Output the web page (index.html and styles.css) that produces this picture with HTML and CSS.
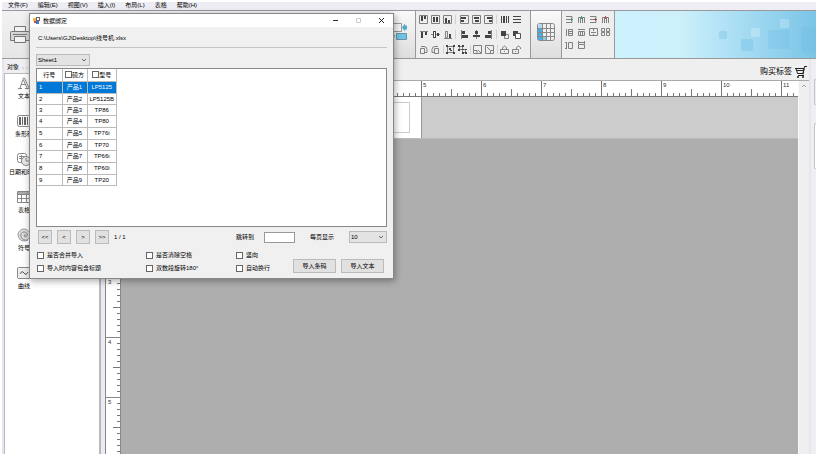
FILE: index.html
```html
<!DOCTYPE html>
<html lang="zh-CN">
<head>
<meta charset="utf-8">
<title>数据绑定</title>
<link rel="stylesheet" href="styles.css">
</head>
<body>
<svg class="defs" aria-hidden="true">
  <symbol id="al-tl" viewBox="0 0 9 9"><path d="M.5.5h8v8h-8z" class="l"/><path d="M2 1h2v5H2zM5 1h2v3H5z" class="d"/></symbol>
  <symbol id="al-c" viewBox="0 0 9 9"><path d="M.5.5h8v8h-8z" class="l"/><path d="M2 2h2v5H2zM5 2h2v5H5z" class="d"/></symbol>
  <symbol id="al-b" viewBox="0 0 9 9"><path d="M.5.5h8v8h-8z" class="l"/><path d="M2 3h2v5H2zM5 5h2v3H5z" class="d"/></symbol>
  <symbol id="al-l" viewBox="0 0 9 9"><path d="M.5.5h8v8h-8z" class="l"/><path d="M1 2h5v2H1zM1 5h3v2H1z" class="d"/></symbol>
  <symbol id="al-m" viewBox="0 0 9 9"><path d="M.5.5h8v8h-8z" class="l"/><path d="M2 2h5v2H2zM3 5h4v2H3z" class="d"/></symbol>
  <symbol id="al-r" viewBox="0 0 9 9"><path d="M.5.5h8v8h-8z" class="l"/><path d="M3 2h5v2H3zM5 5h3v2H5z" class="d"/></symbol>
  <symbol id="dist-h" viewBox="0 0 9 9"><path d="M1 1h1v7H1zM3 1h2v7H3zM6 1h1v7H6zM8 1h1v7H8z" class="d"/></symbol>
  <symbol id="dist-v" viewBox="0 0 9 9"><path d="M1 1h8v1H1zM1 4h8v1H1zM1 7h8v1H1z" class="d"/></symbol>
  <symbol id="top" viewBox="0 0 9 9"><path d="M1 1.5h8" class="l"/><path d="M2 2h2v6H2zM6 2h2v3H6z" class="d"/></symbol>
  <symbol id="mid" viewBox="0 0 9 9"><path d="M0 4.5h9" class="l"/><path d="M2 1h3v7H2zM6 3h2v3H6z" class="d"/><path d="M3 2h1v5H3z" fill="#fff"/></symbol>
  <symbol id="bot" viewBox="0 0 9 9"><path d="M1 8.500h8M2.500 1.500h2v6h-2z" class="l"/><path d="M6 4h2v4H6z" class="d"/></symbol>
  <symbol id="left" viewBox="0 0 9 9"><path d="M1.500 0v9" class="l"/><path d="M2 1h3v3H2zM2 5h6v3H2z" class="d"/></symbol>
  <symbol id="ctr" viewBox="0 0 9 9"><path d="M4.500 0v9" class="l"/><path d="M3 1h3v3H3zM1 5h7v2H1z" class="d"/></symbol>
  <symbol id="right" viewBox="0 0 9 9"><path d="M7.500 0v9" class="l"/><path d="M4 1h3v3H4zM1 5h6v3H1z" class="d"/></symbol>
  <symbol id="front" viewBox="0 0 9 9"><path d="M4.500 4.500h4v4h-4z" class="l"/><path d="M1 1h5v5H1z" class="d"/></symbol>
  <symbol id="back" viewBox="0 0 9 9"><path d="M1 1h5v5H1z" class="d"/><path d="M3.500 3.500h5v5h-5z" stroke="#555" fill="#fff"/></symbol>
  <symbol id="rotl" viewBox="0 0 9 9"><path d="M1.500 3.500h4v5h-4zM2 1.500h3q3 0 3 3v3h-2" class="l"/></symbol>
  <symbol id="rotr" viewBox="0 0 9 9"><path d="M3.500 3.500h4v5h-4zM7 1.500H4q-3 0-3 3v3h2" class="l"/></symbol>
  <symbol id="grp" viewBox="0 0 9 9"><path d="M1.500 1.500h6v6h-6z" class="l"/><path d="M0 0h2v2H0zM7 0h2v2H7zM0 7h2v2H0zM7 7h2v2H7zM3 3h2v2H3zM4 5h2v1H4z" class="d"/></symbol>
  <symbol id="ungrp" viewBox="0 0 9 9"><path d="M1.500 1.500h3v3h-3zM4.500 4.500h3v3h-3z" class="l"/><path d="M0 0h2v2H0zM4 0h2v2H4zM0 4h2v2H0zM4 4h2v1H4zM7 4h2v1H7zM4 7h2v2H4zM7 7h2v2H7z" class="d"/></symbol>
  <symbol id="zoomin" viewBox="0 0 9 9"><path d="M.5.5h8v8h-8zM1 5.500h3v3M5 5l3 3" class="l"/></symbol>
  <symbol id="zoomout" viewBox="0 0 9 9"><path d="M.5.5h8v8h-8zM8 5.500H5.500V8M2 2l3 3" class="l"/></symbol>
  <symbol id="lock" viewBox="0 0 9 9"><path d="M.5 4.500h8v4h-8zM2.500 4V2.500q2-3 4 0V4M4.500 6v1" class="l"/></symbol>
  <symbol id="unlock" viewBox="0 0 9 9"><path d="M.5 4.500h6v4h-6zM4.500 4V2.500q2-3 4 0V4M3.500 6v1" class="l"/></symbol>
  <symbol id="rowadd" viewBox="0 0 9 9"><path d="M1 1.500h6v2M1 7.500h6v-2M1 4.500h4" class="l"/><path d="M5 4h3v1H5zM6 3h1v3H6z" fill="#4f8f6a"/></symbol>
  <symbol id="coladd" viewBox="0 0 9 9"><path d="M1.500 8V2.500h2V8M5.500 8V2.500h2V8" class="l"/><path d="M3 2h3v1H3zM4 1h1v3H4z" fill="#4f9f6e"/></symbol>
  <symbol id="rowdel" viewBox="0 0 9 9"><path d="M1 1.500h6v2M1 7.500h6v-2M1 4.500h4" class="l"/><path d="M5 4h3v1H5zM6 3h1v3H6z" fill="#a04a58"/></symbol>
  <symbol id="coldel" viewBox="0 0 9 9"><path d="M1.500 8V2.500h2V8M5.500 8V2.500h2V8" class="l"/><path d="M3 2h3v1H3zM4 1h1v3H4z" fill="#b9505a"/></symbol>
  <symbol id="rows" viewBox="0 0 9 9"><path d="M1.500 1v7M3.500 1.500h4v6h-4zM3.500 3.500h4M3.500 5.500h4" class="l"/></symbol>
  <symbol id="cols" viewBox="0 0 9 9"><path d="M1 1.500h7M1.500 3.500h6v4h-6zM3.500 3v5M5.500 3v5" class="l"/></symbol>
  <symbol id="merge" viewBox="0 0 9 9"><path d="M.5.5h8v7h-8zM4.500 1v2M4.500 6v2M2 4.500h5" class="l"/></symbol>
  <symbol id="split" viewBox="0 0 9 9"><path d="M.5.5h3v3h-3zM5.500.5h3v3h-3zM.5 4.500h3v3h-3zM5.500 4.500h3v3h-3z" class="l"/></symbol>
  <symbol id="rowh" viewBox="0 0 9 9"><path d="M1.500 1v7M0 1.500h2M0 7.500h2M3.500 1.500h4v6h-4z" class="l"/></symbol>
  <symbol id="colw" viewBox="0 0 9 9"><path d="M1 1.500h7M1.500 0v3M7.500 0v3M1.500 3.500h6v4h-6z" class="l"/></symbol>
</svg>

<div class="app">
  <nav class="menubar">
    <a href="#">文件(F)</a><a href="#">编辑(E)</a><a href="#">视图(V)</a><a href="#">插入(I)</a><a href="#">布局(L)</a><a href="#">表格</a><a href="#">帮助(H)</a>
  </nav>

  <header class="ribbon">
    <div class="group print">
      <button aria-label="打印">
        <svg width="20" height="20" viewBox="0 0 20 20"><path d="M4.500 6V1.500h11V6" fill="#f3f3f3" stroke="#777"/><path d="M1.500 6.500h17q1 0 1 1v8h-19v-8q0-1 1-1z" fill="#d5d5d5" stroke="#777"/><path d="M3 9.500h14" stroke="#777"/><path d="M4.500 11.500h11v6h-11z" fill="#f3f3f3" stroke="#777"/></svg>
      </button>
    </div>
    <div class="group swap">
      <button aria-label="交换">
        <svg width="18" height="18" viewBox="0 0 18 18"><path d="M1.500 1.500h10v8h-10z" fill="#f4f4f4" stroke="#999"/><path d="M12 5.500l3-4v2h2v4h-2v2z" fill="#4ea7cc"/><path d="M5 14l-3-4v2H0v4h2v2z" fill="#51798b"/><path d="M6.500 11.500h10v6h-10z" fill="#6fc4e8" stroke="#6795a9"/></svg>
      </button>
    </div>
    <div class="group arrange">
      <div class="tools">
        <div class="set"><svg><use href="#al-tl"/></svg><svg><use href="#al-c"/></svg><svg><use href="#al-b"/></svg></div><i></i>
        <div class="set"><svg><use href="#al-l"/></svg><svg><use href="#al-m"/></svg><svg><use href="#al-r"/></svg></div><i></i>
        <div class="set"><svg><use href="#dist-h"/></svg><svg><use href="#dist-v"/></svg></div>
      </div>
      <div class="tools">
        <div class="set"><svg><use href="#top"/></svg><svg><use href="#mid"/></svg><svg><use href="#bot"/></svg></div><i></i>
        <div class="set"><svg><use href="#left"/></svg><svg><use href="#ctr"/></svg><svg><use href="#right"/></svg></div><i></i>
        <div class="set"><svg><use href="#front"/></svg><svg><use href="#back"/></svg></div>
      </div>
      <div class="tools">
        <div class="set"><svg><use href="#rotl"/></svg><svg><use href="#rotr"/></svg></div><i></i>
        <div class="set"><svg><use href="#grp"/></svg><svg><use href="#ungrp"/></svg></div><i></i>
        <div class="set"><svg><use href="#zoomin"/></svg><svg><use href="#zoomout"/></svg></div><i></i>
        <div class="set"><svg><use href="#lock"/></svg><svg><use href="#unlock"/></svg></div>
      </div>
    </div>
    <div class="group grid-insert">
      <button aria-label="表格">
        <svg width="18" height="18" viewBox="0 0 18 18"><rect x=".5" y=".5" width="17" height="17" rx="2" fill="#f1f1f1" stroke="#888"/><path d="M1 1h4v4H1z" fill="#b4dbee"/><path d="M1 5h4v12H1z" fill="#47aede"/><path d="M5 13h4v4H5z" fill="#8bcbe8"/><path d="M5.500 1v16M9.500 1v16M13.500 1v16M1 5.500h16M1 9.500h16M1 13.500h16" stroke="#888"/></svg>
      </button>
    </div>
    <div class="group cells">
      <svg><use href="#rowadd"/></svg><svg><use href="#coladd"/></svg><svg><use href="#rowdel"/></svg><svg><use href="#coldel"/></svg>
      <svg><use href="#rows"/></svg><svg><use href="#cols"/></svg><svg><use href="#merge"/></svg><svg><use href="#split"/></svg>
      <svg><use href="#rowh"/></svg><svg><use href="#colw"/></svg>
    </div>
    <div class="banner">
      <svg viewBox="0 0 98 47" width="98" height="47"><g fill="#6cbde3"><rect x="1" y="20" width="8" height="8" rx="1" opacity=".35"/><rect x="23" y="28" width="12" height="12" rx="2" opacity=".35"/><rect x="50" y="19" width="22" height="19" rx="2" opacity=".3"/><rect x="83" y="16" width="20" height="25" rx="3" opacity=".3"/></g><g fill="#c7ebf8"><rect x="33" y="17" width="9" height="9" opacity=".5"/><rect x="62" y="8" width="9" height="9" opacity=".4"/></g></svg>
    </div>
  </header>

  <div class="workspace">
    <aside class="sidebar">
      <h2><span>对象</span></h2>
      <ul>
        <li><svg viewBox="0 0 14 14"><path d="M1 12.500h4M8 12.500h5.500M3 12L6.500 2h1L12 12M10 12L6.500 4M4.500 8.500h4" class="o"/></svg><span>文本</span></li>
        <li><svg viewBox="0 0 14 14"><rect x=".5" y="1.500" width="13" height="11" rx="2" class="o"/><path d="M2 3h2v8H2zM5 3h1v8H5zM7 3h2v8H7zM10 3h1v8h-1z" fill="#666"/></svg><span>条形码</span></li>
        <li><svg viewBox="0 0 14 14"><rect x=".5" y="1.500" width="9" height="9" rx="2" class="o"/><path d="M2 4.500h6M2 6.500h3M4.500 3v6" class="o"/><circle cx="9" cy="9" r="4.500" fill="#e8e8e8" stroke="#888"/><path d="M9 6v3h3" class="o"/></svg><span>日期和时间</span></li>
        <li><svg viewBox="0 0 14 14"><path d="M.5 1.500h13v11H.5z" class="o"/><path d="M1 2h12v2H1z" fill="#aaa"/><path d="M1 4.500h12M1 8.500h12M4.500 4v8M9.500 4v8" class="o"/></svg><span>表格</span></li>
        <li><svg viewBox="0 0 14 14"><circle cx="7" cy="7" r="6" fill="#ddd" stroke="#999"/><path d="M11 12q-5 1-7-3-1-5 3-5 4 0 3 4-2 2-3 0 0-2 2-1" class="o"/></svg><span>符号</span></li>
        <li><svg viewBox="0 0 14 14"><rect x=".5" y="1.500" width="13" height="11" rx="1" fill="#eee" stroke="#888"/><path d="M3 8q2-4 4-1t4-1" fill="none" stroke="#555"/></svg><span>曲线</span></li>
      </ul>
    </aside>
    <div class="splitter"></div>
    <main class="editor">
      <div class="shopbar">
        <a href="#">购买标签 <svg width="12" height="12" viewBox="0 0 12 12"><path d="M0 2.500h9L8 7.500H2.500L1 2.500M8 8.500l1.500-8H12M2 4.500h6M3 9.500h6" fill="none" stroke="#222"/><circle cx="3" cy="11" r="1" fill="#222"/><circle cx="8" cy="11" r="1" fill="#222"/></svg></a>
      </div>
      <div class="stage">
        <div class="sheet">
          <div class="ruler-x"><span></span><span></span><span></span><span></span><span></span><span>5</span><span>6</span><span>7</span><span>8</span><span>9</span><span>10</span><span>11</span></div>
          <div class="ruler-row">
            <div class="ruler-y"><span></span><span></span><span></span><span>3</span><span>4</span><span>5</span></div>
            <div class="canvas"><div class="tape"><div class="label"><div class="frame"></div></div></div></div>
          </div>
        </div>
        <div class="scroll"><svg width="6" height="4" viewBox="0 0 6 4"><path d="M1 3l2-2 2 2" fill="none" stroke="#aaa"/></svg></div>
      </div>
    </main>
    <aside class="dock"><div class="tab"></div><div class="card"></div></aside>
  </div>
</div>

<section class="dialog" role="dialog" aria-label="数据绑定">
  <div class="title">
    <svg width="7" height="7" viewBox="0 0 7 7"><path d="M3 0h4v4H3z" fill="#667"/><path d="M4 1h2v2H4z" fill="#fff"/><path d="M0 1h3v3H0z" fill="#edb54b"/><path d="M1 4h2v2H1z" fill="#c74e3d"/><path d="M3 4h3v3H3z" fill="#4778c7"/></svg>
    <h1>数据绑定</h1>
    <div class="window-buttons">
      <button aria-label="最小化"><svg viewBox="0 0 7 7"><path d="M1 3.500h5" stroke="#333"/></svg></button>
      <button aria-label="最大化" disabled><svg viewBox="0 0 7 7"><path d="M1.500 1.500h4v4h-4z" fill="none" stroke="#ccc"/></svg></button>
      <button aria-label="关闭"><svg viewBox="0 0 7 7"><path d="M1 1l5 5M6 1L1 6" stroke="#222"/></svg></button>
    </div>
  </div>
  <form class="content">
    <p class="path">C:\Users\GJ\Desktop\线号机.xlsx</p>
    <div class="pick sheet-pick"><select aria-label="工作表"><option>Sheet1</option></select><svg width="6" height="4" viewBox="0 0 6 4"><path d="M1 1l2 2 2-2" fill="none" stroke="#666"/></svg></div>
    <div class="grid-box">
      <table>
        <thead><tr><th>行号</th><th><label><input type="checkbox">硕方</label></th><th><label><input type="checkbox">型号</label></th></tr></thead>
        <tbody>
          <tr class="selected"><td>1</td><td>产品1</td><td>LP5125</td></tr>
          <tr><td>2</td><td>产品2</td><td>LP5125B</td></tr>
          <tr><td>3</td><td>产品3</td><td>TP86</td></tr>
          <tr><td>4</td><td>产品4</td><td>TP80</td></tr>
          <tr><td>5</td><td>产品5</td><td>TP76i</td></tr>
          <tr><td>6</td><td>产品6</td><td>TP70</td></tr>
          <tr><td>7</td><td>产品7</td><td>TP66i</td></tr>
          <tr><td>8</td><td>产品8</td><td>TP60i</td></tr>
          <tr><td>9</td><td>产品9</td><td>TP20</td></tr>
        </tbody>
      </table>
    </div>
    <div class="pager">
      <button type="button">&lt;&lt;</button><button type="button">&lt;</button><button type="button">&gt;</button><button type="button">&gt;&gt;</button>
      <span class="count">1 / 1</span>
      <label class="jump">跳转到 <input type="text"></label>
      <label class="size" for="size">每页显示</label>
      <div class="pick size-pick"><select id="size"><option>10</option></select><svg width="6" height="4" viewBox="0 0 6 4"><path d="M1 1l2 2 2-2" fill="none" stroke="#666"/></svg></div>
    </div>
    <div class="footer">
      <div class="options">
        <label><input type="checkbox">是否合并导入</label>
        <label><input type="checkbox">是否清除空格</label>
        <label><input type="checkbox">竖向</label>
        <label><input type="checkbox">导入时内容包含标题</label>
        <label><input type="checkbox">双数段旋转180°</label>
        <label><input type="checkbox">自动换行</label>
      </div>
      <div class="actions"><button type="button">导入条码</button><button type="button">导入文本</button></div>
    </div>
  </form>
</section>
</body>
</html>
```
FILE: styles.css
```css
* { box-sizing: border-box; }

body {
  margin: 0;
  background: #fff;
  color: #000;
  font: 6px/10px "Liberation Sans", "Noto Sans CJK SC", sans-serif;
}

button, input, select { font: inherit; color: inherit; margin: 0; }
button { padding: 0; }
a { color: inherit; text-decoration: none; }
svg { display: block; flex: none; }
.defs { position: absolute; width: 0; height: 0; }
.l { fill: none; stroke: #808080; }
.d { fill: #444; }
.o { fill: none; stroke: #888; }

.app {
  display: flex;
  flex-direction: column;
  height: 100vh;
  padding: 2px;
  overflow: hidden;
}

/* Menu */
.menubar {
  display: flex;
  flex: none;
  align-items: center;
  gap: 10px;
  height: 8px;
  padding: 0 6px 3px;
  background: #ededf3;
}

/* Ribbon */
.ribbon {
  display: flex;
  flex: none;
  height: 49px;
  background: #eee;
  border: solid #999;
  border-width: 1px 0;
}
.group { flex: none; border-right: 1px solid #999; }
.group button { border: 0; background: none; }
.print { width: 388px; padding: 14px 8px; border: 0; background: linear-gradient(#f2f2f2, #e6e6e6); }
.swap { width: 26px; padding: 11px 0; background: linear-gradient(#fafafa, #ddd); }
.arrange { display: flex; flex-direction: column; gap: 6px; width: 115px; padding: 4px 9px 0 3px; }
.arrange svg, .cells svg { width: 9px; height: 9px; }
.tools { display: flex; justify-content: space-between; align-items: center; }
.tools i { width: 1px; height: 9px; background: #d2d2d2; }
.set { display: flex; gap: 3px; }
.grid-insert { width: 31px; padding: 12px 6px; background: linear-gradient(#fafafa, #ddd); }
.cells { display: grid; grid-template-columns: repeat(4, 9px); gap: 4px 3px; align-content: start; width: 53px; padding: 4px 3px; }
.banner {
  display: flex;
  flex: 1;
  justify-content: flex-end;
  overflow: hidden;
  background: linear-gradient(to right, #cdf2fd 0%, #cdf0fb 32%, #a5dbf2 65%, #7bc4e6 100%);
}

/* Workspace */
.workspace { display: flex; flex: 1; min-height: 0; }
.sidebar {
  display: flex;
  flex: none;
  flex-direction: column;
  width: 98px;
  padding-top: 3px;
  background: #efeff2;
  border-left: 2px solid #e4e4f0;
}
.sidebar h2 {
  display: flex;
  align-items: center;
  gap: 3px;
  margin: 0;
  padding-left: 3px;
  font-size: 6px;
  font-weight: 400;
  line-height: 11px;
}
.sidebar h2::after { content: ""; flex: 1; border-top: 2px dotted #d8d8de; }
.sidebar ul {
  flex: 1;
  margin: 0;
  padding: 2px 0;
  overflow: hidden;
  list-style: none;
  background: #fff;
  border: 1px solid #bbb;
  border-bottom: 0;
}
.sidebar li { display: flex; flex-direction: column; align-items: center; width: 38px; height: 38px; gap: 1px; }
.sidebar li svg { width: 14px; height: 14px; }
.splitter { flex: none; width: 5px; background: #ebebf6; border-left: 1px solid #b5b5bd; }

.editor { display: flex; flex: 1; flex-direction: column; min-width: 0; background: #efefef; border-left: 1px solid #888; }
.shopbar { display: flex; flex: none; justify-content: flex-end; align-items: center; height: 22px; padding: 4px 2px 0 0; border-bottom: 1px solid #aaa; }
.shopbar a { display: flex; align-items: center; gap: 3px; font-size: 8px; }
.stage { display: flex; flex: 1; min-height: 0; }
.sheet { display: flex; flex: 1; flex-direction: column; min-width: 0; background: #fff; }

.ruler-x { display: flex; flex: none; height: 16px; margin-left: 15px; overflow: hidden; border-bottom: 1px solid #777; color: #333; }
.ruler-x span {
  flex: none;
  width: 60px;
  padding-left: 1px;
  line-height: 8px;
  border-left: 1px solid #777;
  background:
    linear-gradient(#777, #777) 29px 100% / 1px 7px no-repeat,
    repeating-linear-gradient(to right, transparent 0 5px, #777 5px 6px) 0 100% / 100% 3px no-repeat;
}
.ruler-row { display: flex; flex: 1; min-height: 0; }
.ruler-y { flex: none; width: 15px; overflow: hidden; border-right: 1px solid #888; color: #333; }
.ruler-y span {
  display: block;
  height: 60px;
  padding-left: 2px;
  line-height: 8px;
  border-top: 1px solid #888;
  background:
    linear-gradient(#777, #777) 100% 29px / 7px 1px no-repeat,
    repeating-linear-gradient(to bottom, transparent 0 5px, #777 5px 6px) 100% 0 / 3px 100% no-repeat;
}
.canvas { flex: 1; min-width: 0; background: #aeaeae; }
.tape { height: 42px; background: #ccc; border-bottom: 1px solid #bbb; }
.label { width: 301px; height: 41px; padding: 5px 11px 4px 5px; background: #fff; border-right: 1px solid #999; }
.frame { height: 31px; border: 1px solid #ccc; }
.scroll { display: flex; flex: none; justify-content: center; width: 11px; padding-top: 3px; border-left: 1px solid #f8f8f8; }

.dock { flex: none; width: 7px; padding-left: 3px; background: #efeff2; border-left: 2px solid #e6e6f1; }
.tab { height: 26px; margin-top: 20px; border: 1px solid #c4c4c4; border-right: 0; border-radius: 3px 0 0 3px; }
.card { height: 46px; margin-top: 18px; background: #fff; border: 1px solid #c4c4c4; border-right: 0; border-radius: 3px 0 0 3px; }

/* Data binding dialog */
.dialog {
  position: absolute;
  top: 13px;
  left: 29px;
  width: 365px;
  background: #f0f0f0;
  border: 1px solid #888;
  box-shadow: 1px 2px 7px rgba(0, 0, 0, .35);
}
.title { display: flex; align-items: center; gap: 3px; height: 13px; padding: 0 8px 0 3px; background: #fff; }
.title h1 { margin: 0; font-size: 6px; font-weight: 400; }
.window-buttons { display: flex; gap: 16px; margin-left: auto; }
.window-buttons button { width: 7px; height: 7px; border: 0; background: none; }
.window-buttons svg { width: 7px; height: 7px; }

.content { padding: 6px 6px 5px 6px; }
.path { margin: 0 0 6px; padding: 0 0 4px 2px; border-bottom: 1px solid #c4c4c4; }

.pick { display: flex; align-items: center; height: 12px; padding-right: 2px; background: #e3e3e3; border: 1px solid #bbb; }
.pick select { flex: 1; width: 100%; margin-right: -6px; padding: 0; appearance: none; border: 0; outline: 0; background: none; }
.sheet-pick { width: 54px; padding-left: 1px; }

.grid-box { height: 159px; margin-top: 2px; background: #fff; border: 1px solid #888; }
table { width: 80px; border-collapse: collapse; table-layout: fixed; line-height: 8px; }
th, td { height: 12px; padding: 0; border: 1px solid #bbb; font-weight: 400; text-align: center; }
tbody tr:nth-child(3n) td, tbody tr:nth-child(2) td { height: 11px; }
th { border-top: 0; }
th:first-child, td:first-child { width: 25px; border-left: 0; }
th:nth-child(2) { width: 25px; }
td:first-child { padding-left: 2px; text-align: left; }
th label { display: flex; justify-content: center; align-items: center; }
.selected { background: #0078d7; color: #fff; }

input[type="checkbox"] { flex: none; width: 7px; height: 7px; appearance: none; background: #fff; border: 1px solid #666; }

.pager { display: flex; align-items: center; gap: 5px; height: 14px; margin-top: 3px; padding-left: 2px; }
.pager button, .actions button { background: #e1e1e1; border: 1px solid #bbb; }
.pager button { width: 14px; height: 14px; line-height: 8px; }
.count { width: 117px; }
.jump { display: flex; align-items: center; gap: 10px; }
.jump input { width: 31px; height: 11px; padding: 0 1px; background: #fff; border: 1px solid #999; }
.size { margin-left: 10px; }
.size-pick { width: 38px; margin-left: auto; padding-left: 1px; }

.footer { display: flex; justify-content: space-between; align-items: flex-end; margin-top: 6px; padding-right: 3px; }
.options { display: grid; grid-template-columns: 109px 90px auto; gap: 3px 0; padding-left: 1px; }
.options label { display: flex; align-items: center; gap: 3px; }
.actions { display: flex; gap: 5px; }
.actions button { width: 43px; height: 14px; line-height: 10px; }
```
